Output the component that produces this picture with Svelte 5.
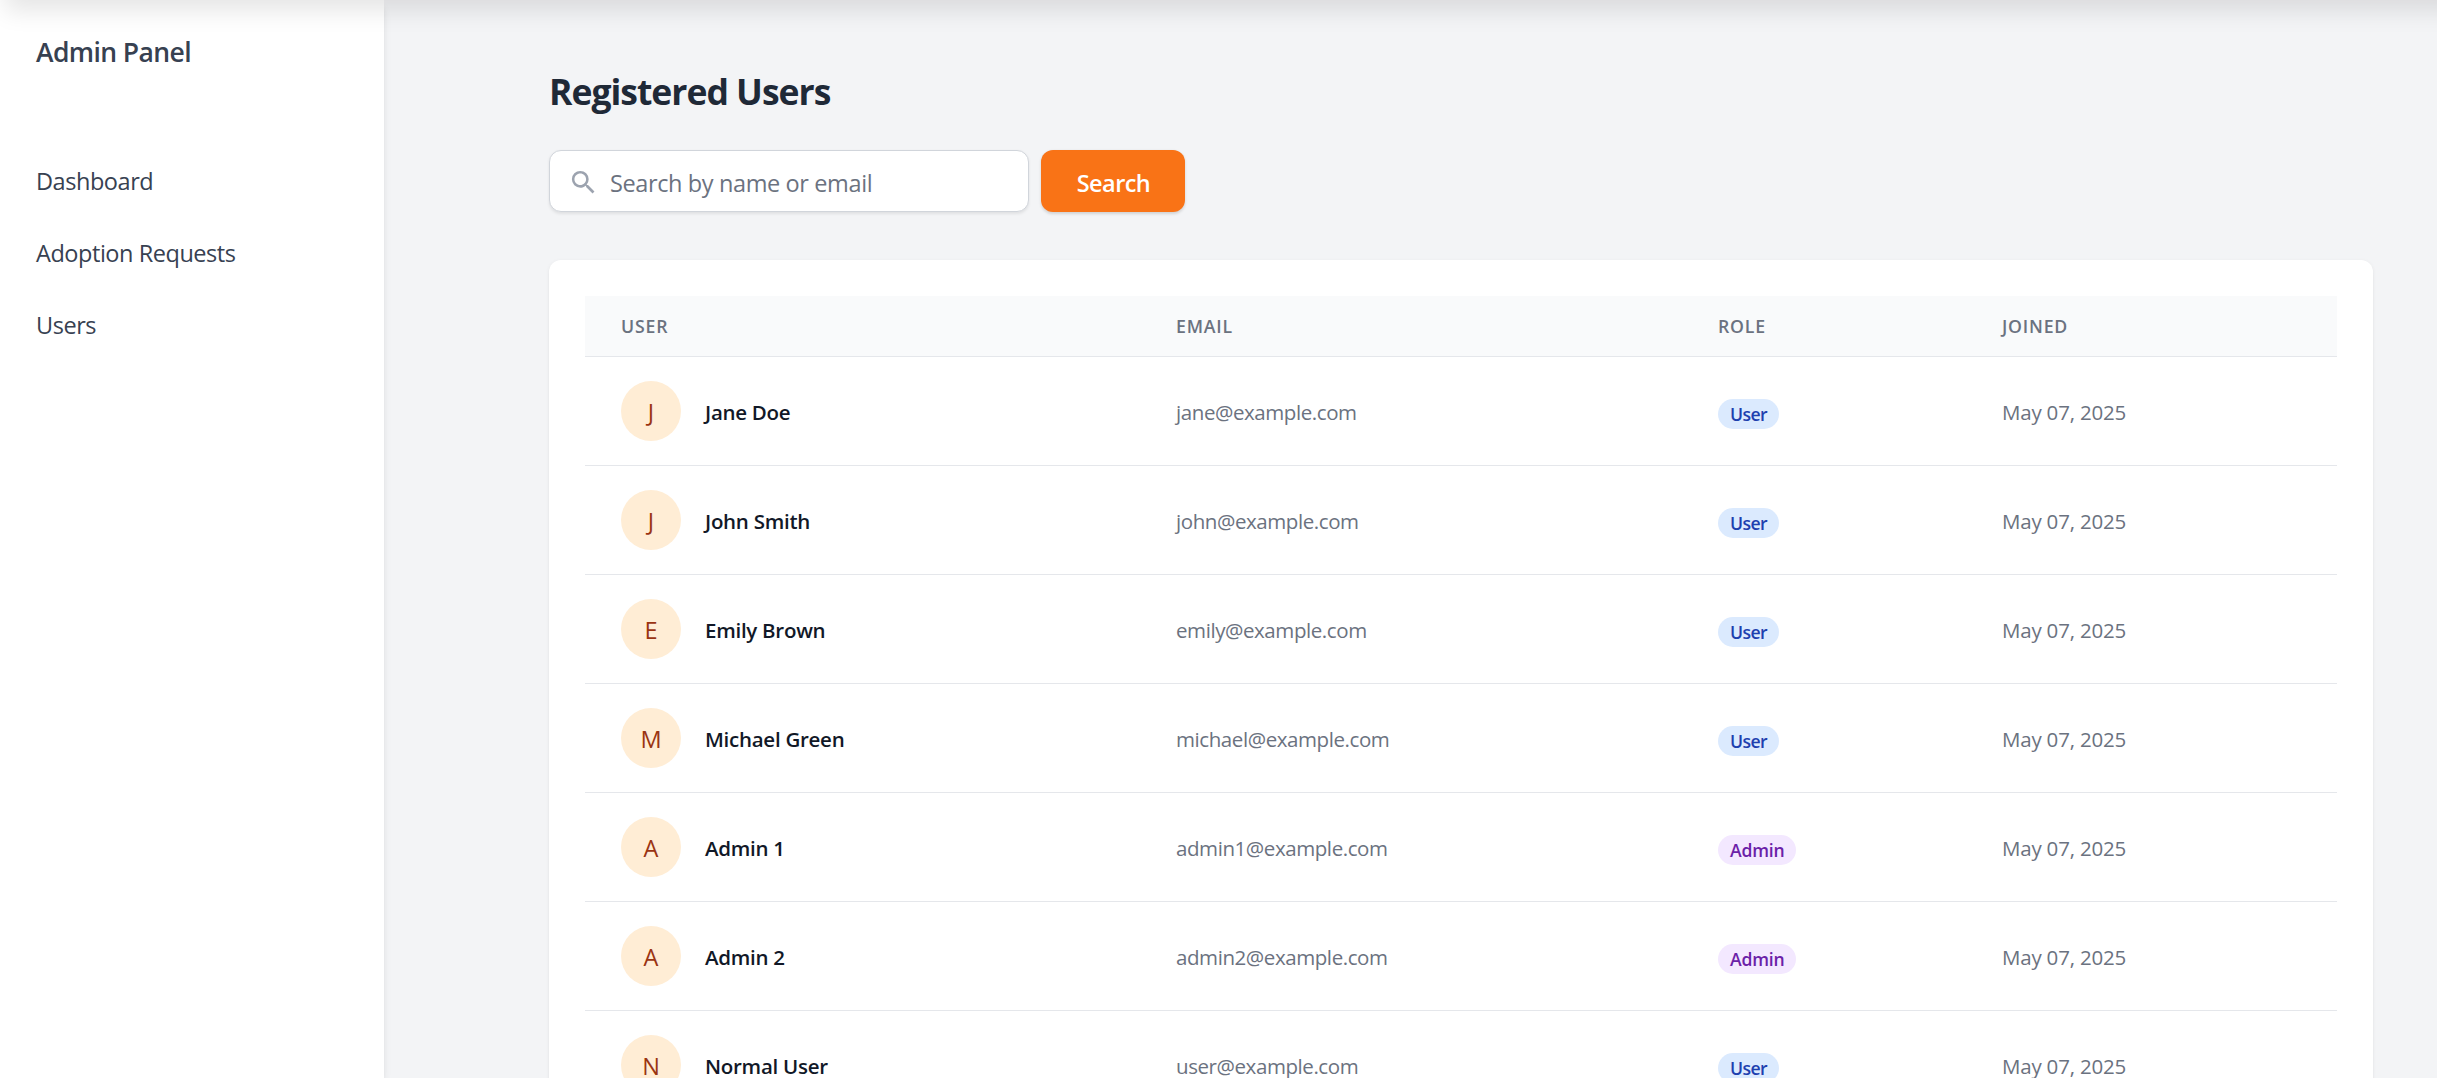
<script>
  const links = ['Dashboard', 'Adoption Requests', 'Users'];
  const columns = ['User', 'Email', 'Role', 'Joined'];
  const users = [
    { name: 'Jane Doe', email: 'jane@example.com', role: 'User' },
    { name: 'John Smith', email: 'john@example.com', role: 'User' },
    { name: 'Emily Brown', email: 'emily@example.com', role: 'User' },
    { name: 'Michael Green', email: 'michael@example.com', role: 'User' },
    { name: 'Admin 1', email: 'admin1@example.com', role: 'Admin' },
    { name: 'Admin 2', email: 'admin2@example.com', role: 'Admin' },
    { name: 'Normal User', email: 'user@example.com', role: 'User' }
  ].map((u) => ({ ...u, joined: 'May 07, 2025' }));
  let query = $state('');
</script>

<div class="app">
  <div class="topshade"></div>
  <aside>
    <h2>Admin Panel</h2>
    <nav>
      {#each links as link}
        <a href="#top">{link}</a>
      {/each}
    </nav>
  </aside>

  <main>
    <h1>Registered Users</h1>
    <form onsubmit={(e) => e.preventDefault()}>
      <label class="field">
        <svg viewBox="0 0 24 24" aria-hidden="true">
          <path d="M15.5 14h-.79l-.28-.27A6.471 6.471 0 0 0 16 9.5 6.5 6.5 0 1 0 9.5 16c1.61 0 3.09-.59 4.23-1.57l.27.28v.79l5 4.99L20.49 19l-4.99-5zm-6 0C7.01 14 5 11.99 5 9.5S7.01 5 9.5 5 14 7.01 14 9.5 11.99 14 9.5 14z" />
        </svg>
        <input type="text" placeholder="Search by name or email" bind:value={query} />
      </label>
      <button type="submit">Search</button>
    </form>

    <section class="card">
      <div class="row head">
        {#each columns as column}
          <div class="cell">{column}</div>
        {/each}
      </div>
      {#each users as user}
        <div class="row">
          <div class="cell person">
            <span class="avatar">{user.name[0]}</span>
            <span class="name">{user.name}</span>
          </div>
          <div class="cell email">{user.email}</div>
          <div class="cell"><span class="badge" class:admin={user.role === 'Admin'}>{user.role}</span></div>
          <div class="cell date">{user.joined}</div>
        </div>
      {/each}
    </section>
  </main>
</div>

<style>
  :global(body) {
    margin: 0;
    overflow: hidden;
  }
  .app, .app * {
    box-sizing: border-box;
  }
  .app {
    position: relative;
    display: flex;
    height: 1078px;
    overflow: hidden;
    background: #f3f4f6;
    font-family: "Segoe UI", "Open Sans", "Noto Sans", sans-serif;
    font-size: 23.5px;
    color: #374151;
  }
  /* Shadow cast by the navigation bar above the page */
  .topshade {
    position: absolute;
    z-index: 2;
    top: -96px;
    left: 0;
    right: -40px;
    height: 96px;
    box-shadow: 0 15px 22.5px -4.5px rgb(0 0 0 / 0.1);
  }
  aside {
    flex: none;
    width: 384px;
    padding: 36px 36px 0;
    background: #fff;
    box-shadow: 0 6px 9px -1.5px rgb(0 0 0 / 0.1), 0 3px 6px -3px rgb(0 0 0 / 0.1);
  }
  h2 {
    margin: 0 0 77px;
    font-size: 26.5px;
    line-height: 32px;
    font-weight: 600;
    letter-spacing: -0.6px;
  }
  nav {
    display: flex;
    flex-direction: column;
  }
  nav a {
    line-height: 72px;
    letter-spacing: -0.45px;
    color: inherit;
    text-decoration: none;
  }
  main {
    flex: 1;
    padding: 67px 64px 0 165px;
  }
  h1 {
    margin: 0 0 35px;
    font-size: 35.5px;
    line-height: 48px;
    font-weight: 700;
    letter-spacing: -1px;
    color: #1f2937;
  }
  form {
    display: flex;
    gap: 12px;
    height: 62px;
    margin-bottom: 48px;
  }
  .field {
    display: flex;
    align-items: center;
    width: 480px;
    padding-left: 18px;
    border: 1px solid #d1d5db;
    border-radius: 12px;
    background: #fff;
    box-shadow: 0 1.5px 3px rgb(0 0 0 / 0.08);
  }
  svg {
    width: 31px;
    height: 31px;
    margin-top: 2px;
    fill: #9ca3af;
  }
  input {
    flex: 1;
    min-width: 0;
    height: 100%;
    padding: 3px 12px 0 11px;
    border: 0;
    outline: 0;
    background: none;
    font: inherit;
    letter-spacing: -0.38px;
    color: #374151;
  }
  input::placeholder {
    color: #6b7280;
    opacity: 1;
  }
  button {
    width: 144px;
    padding: 3px 0 0 1px;
    border: 0;
    border-radius: 12px;
    background: #f97316;
    box-shadow: 0 1.5px 3px rgb(0 0 0 / 0.14);
    font: inherit;
    font-weight: 600;
    letter-spacing: -0.55px;
    color: #fff;
  }
  .card {
    height: 900px;
    padding: 36px;
    border-radius: 12px;
    background: #fff;
    box-shadow: 0 1.5px 4.5px rgb(0 0 0 / 0.06), 0 1.5px 3px -1.5px rgb(0 0 0 / 0.06);
  }
  .row {
    display: grid;
    grid-template-columns: 555px 542px 284px 1fr;
    align-items: center;
    height: 109px;
    border-bottom: 1px solid #e5e7eb;
  }
  .head {
    height: 61px;
    background: #f9fafb;
    font-size: 17.7px;
    font-weight: 600;
    letter-spacing: 0.8px;
    text-transform: uppercase;
    color: #6b7280;
  }
  .cell {
    padding: 0 36px;
    white-space: nowrap;
  }
  .person {
    display: flex;
    align-items: center;
    gap: 24px;
  }
  .avatar {
    display: flex;
    align-items: center;
    justify-content: center;
    width: 60px;
    height: 60px;
    padding-top: 2px;
    border-radius: 50%;
    background: #ffedd5;
    color: #9a3412;
  }
  .name {
    padding-top: 2px;
    font-size: 20.5px;
    font-weight: 600;
    letter-spacing: -0.27px;
    color: #111827;
  }
  .email, .date {
    padding-top: 2px;
    font-size: 20.5px;
    letter-spacing: -0.42px;
    color: #6b7280;
  }
  .date {
    letter-spacing: -0.2px;
  }
  .badge {
    display: block;
    width: fit-content;
    margin-top: 6px;
    padding: 0 12px;
    border-radius: 15px;
    background: #dbeafe;
    font-size: 17.6px;
    line-height: 30px;
    font-weight: 600;
    letter-spacing: -0.6px;
    color: #1e40af;
  }
  .badge.admin {
    background: #f3e8ff;
    letter-spacing: -0.2px;
    color: #6b21a8;
  }
</style>
